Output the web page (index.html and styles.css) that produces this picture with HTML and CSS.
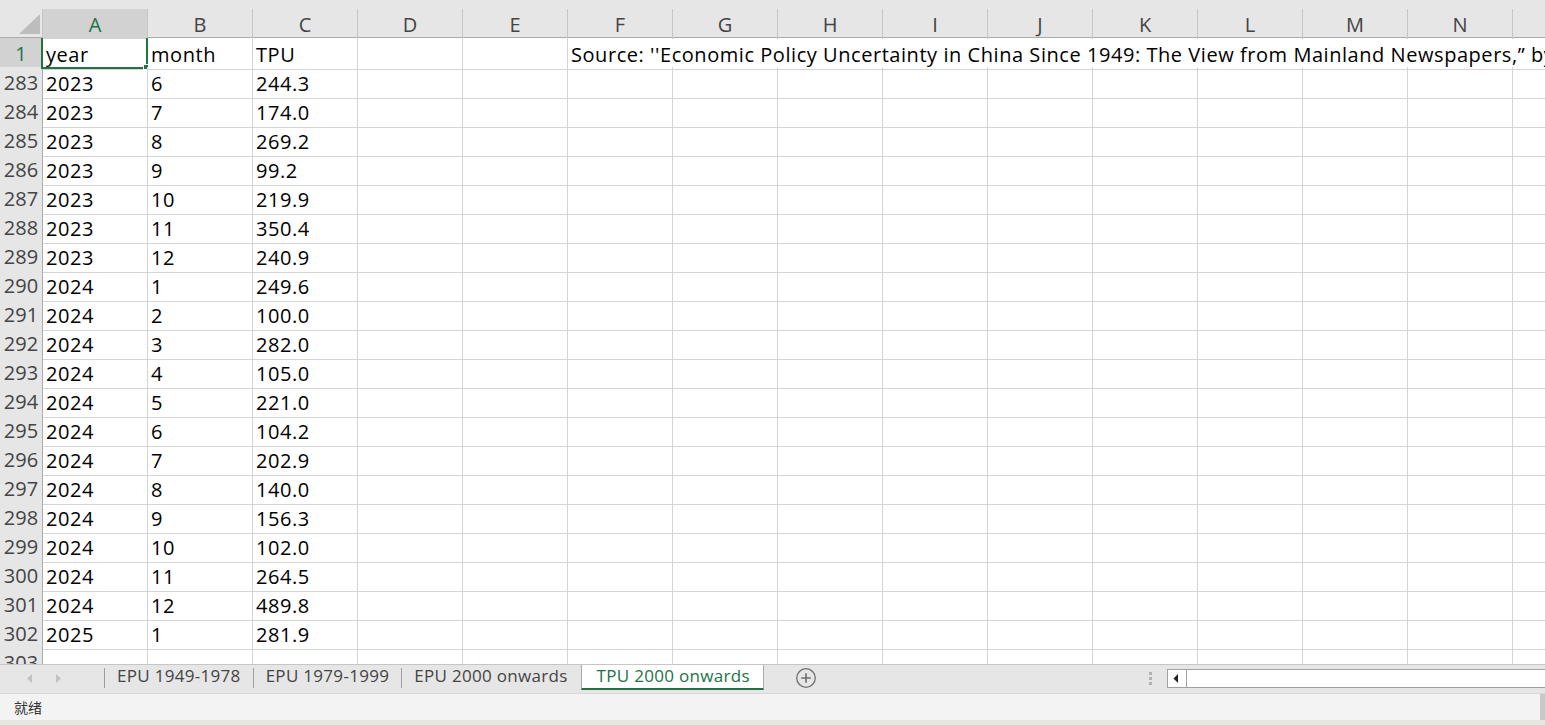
FILE: index.html
```html
<!DOCTYPE html>
<html lang="zh-CN">
<head>
<meta charset="utf-8">
<title>TPU 2000 onwards</title>
<link rel="stylesheet" href="styles.css">
</head>
<body>
<div class="app">
  <div class="top-strip"></div>
  <div class="col-head">
    <div class="corner"><svg width="43" height="28" viewBox="0 0 43 28"><polygon points="40,5 40,25 19,25" fill="#bdbdbd"/></svg></div>
    <div class="ch sel-h">A</div><div class="ch">B</div><div class="ch">C</div><div class="ch">D</div><div class="ch">E</div>
    <div class="ch">F</div><div class="ch">G</div><div class="ch">H</div><div class="ch">I</div><div class="ch">J</div>
    <div class="ch">K</div><div class="ch">L</div><div class="ch">M</div><div class="ch">N</div><div class="ch"></div>
  </div>
  <div class="sheet">
    <div class="row">
      <div class="rh sel-r">1</div>
      <div class="c active">year<span class="sel-box"><span class="handle"></span></span></div>
      <div class="c">month</div>
      <div class="c">TPU</div>
      <div class="c"></div>
      <div class="c"></div>
      <div class="c over">Source: ''Economic Policy Uncertainty in China Since 1949: The View from Mainland Newspapers,” by Scott R. Baker, Nicholas Bloom, Steven J. Davis</div>
    </div>
    <div class="row"><div class="rh">283</div><div class="c">2023</div><div class="c">6</div><div class="c">244.3</div><div class="rest"></div></div>
    <div class="row"><div class="rh">284</div><div class="c">2023</div><div class="c">7</div><div class="c">174.0</div><div class="rest"></div></div>
    <div class="row"><div class="rh">285</div><div class="c">2023</div><div class="c">8</div><div class="c">269.2</div><div class="rest"></div></div>
    <div class="row"><div class="rh">286</div><div class="c">2023</div><div class="c">9</div><div class="c">99.2</div><div class="rest"></div></div>
    <div class="row"><div class="rh">287</div><div class="c">2023</div><div class="c">10</div><div class="c">219.9</div><div class="rest"></div></div>
    <div class="row"><div class="rh">288</div><div class="c">2023</div><div class="c">11</div><div class="c">350.4</div><div class="rest"></div></div>
    <div class="row"><div class="rh">289</div><div class="c">2023</div><div class="c">12</div><div class="c">240.9</div><div class="rest"></div></div>
    <div class="row"><div class="rh">290</div><div class="c">2024</div><div class="c">1</div><div class="c">249.6</div><div class="rest"></div></div>
    <div class="row"><div class="rh">291</div><div class="c">2024</div><div class="c">2</div><div class="c">100.0</div><div class="rest"></div></div>
    <div class="row"><div class="rh">292</div><div class="c">2024</div><div class="c">3</div><div class="c">282.0</div><div class="rest"></div></div>
    <div class="row"><div class="rh">293</div><div class="c">2024</div><div class="c">4</div><div class="c">105.0</div><div class="rest"></div></div>
    <div class="row"><div class="rh">294</div><div class="c">2024</div><div class="c">5</div><div class="c">221.0</div><div class="rest"></div></div>
    <div class="row"><div class="rh">295</div><div class="c">2024</div><div class="c">6</div><div class="c">104.2</div><div class="rest"></div></div>
    <div class="row"><div class="rh">296</div><div class="c">2024</div><div class="c">7</div><div class="c">202.9</div><div class="rest"></div></div>
    <div class="row"><div class="rh">297</div><div class="c">2024</div><div class="c">8</div><div class="c">140.0</div><div class="rest"></div></div>
    <div class="row"><div class="rh">298</div><div class="c">2024</div><div class="c">9</div><div class="c">156.3</div><div class="rest"></div></div>
    <div class="row"><div class="rh">299</div><div class="c">2024</div><div class="c">10</div><div class="c">102.0</div><div class="rest"></div></div>
    <div class="row"><div class="rh">300</div><div class="c">2024</div><div class="c">11</div><div class="c">264.5</div><div class="rest"></div></div>
    <div class="row"><div class="rh">301</div><div class="c">2024</div><div class="c">12</div><div class="c">489.8</div><div class="rest"></div></div>
    <div class="row"><div class="rh">302</div><div class="c">2025</div><div class="c">1</div><div class="c">281.9</div><div class="rest"></div></div>
    <div class="row"><div class="rh">303</div><div class="c"></div><div class="c"></div><div class="c"></div><div class="rest"></div></div>
  </div>
  <div class="tabbar">
    <div class="nav">
      <svg width="104" height="28" viewBox="0 0 104 28"><polygon points="32,9 32,18 27,13.5" fill="#c2c2c2"/><polygon points="56,9 56,18 61,13.5" fill="#c2c2c2"/></svg>
    </div>
    <div class="sep"></div>
    <div class="tab">EPU 1949-1978</div>
    <div class="sep"></div>
    <div class="tab">EPU 1979-1999</div>
    <div class="sep"></div>
    <div class="tab last">EPU 2000 onwards</div>
    <div class="tab on">TPU 2000 onwards</div>
    <div class="add"><svg width="22" height="22" viewBox="0 0 22 22"><circle cx="11" cy="11" r="9.3" fill="none" stroke="#6f6f6f" stroke-width="1.3"/><path d="M11 6.2v9.6M6.2 11h9.6" stroke="#6f6f6f" stroke-width="1.6"/></svg></div>
    <div class="spacer"></div>
    <div class="dots"><span></span><span></span><span></span></div>
    <div class="hscroll">
      <div class="hbtn"><svg width="19" height="17" viewBox="0 0 19 17"><polygon points="10,4 10,13 5.5,8.5" fill="#222"/></svg></div>
    </div>
  </div>
  <div class="status">
    <span class="ready">就绪</span>
    <span class="edge"></span>
  </div>
  <div class="bottom-strip"></div>
</div>
</body>
</html>
```
FILE: styles.css
```css
* { box-sizing: border-box; margin: 0; padding: 0; }
html, body { width: 1545px; height: 725px; overflow: hidden; background: #fff; }
body { font-family: "Open Sans", "Noto Sans CJK SC", sans-serif; color: #000; }
.app { display: flex; flex-direction: column; height: 725px; width: 1545px; overflow: hidden; }

.top-strip { height: 9px; background: #e6e6e6; flex: none; }

.col-head {
  flex: none;
  display: grid;
  grid-template-columns: 43px repeat(15, 105px);
  height: 29px;
  background: #e6e6e6;
  border-bottom: 1px solid #ababab;
}
.corner { border-right: 1px solid #c6c6c6; }
.corner svg { display: block; }
.ch {
  border-right: 1px solid #c6c6c6;
  display: flex; align-items: center; justify-content: center;
  font-size: 20px; color: #444; line-height: 28px; padding-top: 2px;
}
.ch.sel-h { background: #d2d2d2; color: #217346; }

.sheet { flex: none; height: 626px; overflow: hidden; }
.row {
  display: grid;
  grid-template-columns: 43px repeat(5, 105px) 1fr;
  height: 29px;
}
.rh {
  background: #e6e6e6;
  border-right: 1px solid #ababab;
  border-bottom: 1px solid #d0d0d0;
  text-align: center;
  font-size: 20px; color: #444;
  line-height: 29px; padding-top: 1px;
  overflow: hidden;
}
.rh.sel-r { background: #d2d2d2; color: #217346; }
.c {
  position: relative;
  border-right: 1px solid #d4d4d4;
  border-bottom: 1px solid #d4d4d4;
  font-size: 20px; line-height: 29px; padding: 2px 0 0 3px;
  letter-spacing: 0.55px;
  white-space: nowrap;
}
.c.over { border-right: none; overflow: hidden; }
.rest {
  grid-column: 5 / -1;
  border-bottom: 1px solid #d4d4d4;
  background: repeating-linear-gradient(to right, transparent 0 104px, #d4d4d4 104px 105px);
}
.sel-box {
  position: absolute; left: -2px; top: -2px; right: -1px; bottom: 0;
  border: 2px solid #217346;
}
.handle {
  position: absolute; right: -3px; bottom: -3px;
  width: 6px; height: 6px; background: #217346;
  border: 1px solid #fff;
}

.tabbar {
  flex: none;
  height: 29px;
  background: #e6e6e6;
  border-top: 1px solid #c6c6c6;
  display: flex; align-items: flex-start;
}
.nav { width: 104px; height: 28px; flex: none; }
.nav svg { display: block; }
.sep { width: 1px; height: 20px; margin-top: 3px; background: #9e9e9e; flex: none; }
.tab {
  flex: none;
  padding: 0 12px 0 12px;
  height: 25px;
  font-size: 17px; line-height: 22px; color: #444;
  letter-spacing: 0.3px;
  white-space: nowrap;
}
.tab.last { padding-right: 13px; }
.tab.on {
  background: #fff; color: #217346;
  border-left: 1px solid #aaaaaa; border-right: 1px solid #aaaaaa;
  border-bottom: 2px solid #217346;
  padding: 0 13px 0 15px;
}
.add { margin-left: 31px; margin-top: 2px; flex: none; }
.add svg { display: block; }
.spacer { flex: 1; }
.dots { flex: none; width: 3px; margin-top: 7px; margin-right: 15px; display: flex; flex-direction: column; gap: 2px; }
.dots span { display: block; width: 3px; height: 3px; background: #b2b2b2; }
.hscroll {
  flex: none;
  width: 378px; height: 19px; margin-top: 4px;
  background: #fff; border: 1px solid #a0a0a0; border-right: none;
  display: flex;
}
.hbtn { width: 19px; height: 17px; border-right: 1px solid #a0a0a0; }
.hbtn svg { display: block; }

.status {
  flex: none;
  height: 27px;
  background: #f3f3f3;
  border-top: 1px solid #d8d8d8;
  display: flex; align-items: center; justify-content: space-between;
}
.ready { font-family: "Noto Sans CJK SC", sans-serif; font-size: 14px; color: #333; padding-left: 14px; }
.edge { width: 5px; height: 26px; background: #c8c8c8; }
.bottom-strip { flex: none; height: 5px; background: #e8e6e0; }
```
